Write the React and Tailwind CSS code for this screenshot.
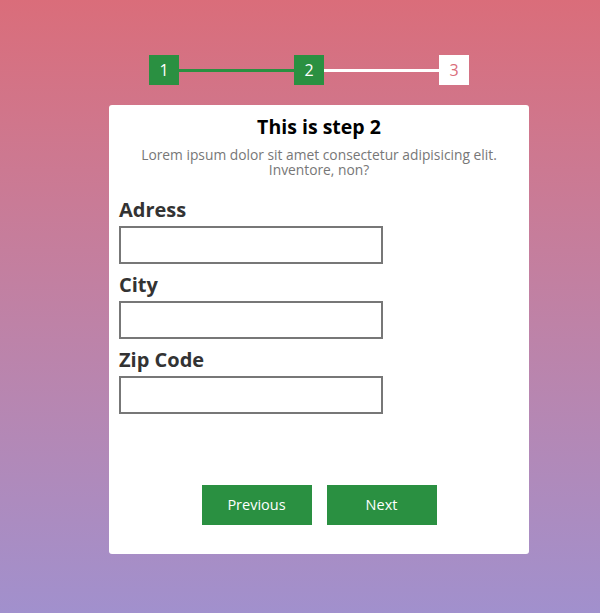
export default function App() {
  return (
    <div
      className="w-full min-h-[613px] bg-gradient-to-b from-[#da6d7a] to-[#a190cd] flex flex-col items-center pt-[55px]"
      style={{ fontFamily: '"Open Sans", "Liberation Sans", sans-serif' }}
    >
      {/* Step indicator */}
      <div className="flex items-center ml-[18px]">
        <div className="w-[30px] h-[30px] bg-[#2a9041] text-white flex items-center justify-center text-[16px]">1</div>
        <div className="w-[115px] h-[3px] bg-[#2a9041]" />
        <div className="w-[30px] h-[30px] bg-[#2a9041] text-white flex items-center justify-center text-[16px]">2</div>
        <div className="w-[115px] h-[3px] bg-white" />
        <div className="w-[30px] h-[30px] bg-white text-[#da6d7a] flex items-center justify-center text-[16px]">3</div>
      </div>

      {/* Card */}
      <div className="mt-[20px] ml-[38px] w-[420px] h-[449px] bg-white rounded-[3px] px-[10px] pt-[10px] flex flex-col">
        <h2 className="text-center text-[19.5px] font-bold text-black leading-[24px]">This is step 2</h2>
        <p className="mt-[8px] text-center text-[13.8px] leading-[15px] text-[#777] px-[20px]">
          Lorem ipsum dolor sit amet consectetur adipisicing elit. Inventore, non?
        </p>

        <div className="mt-[21px] flex flex-col">
          <label className="text-[20px] font-bold text-[#333] leading-[24px]">Adress</label>
          <input className="mt-[4px] w-[264px] h-[38px] border-2 border-[#777] outline-none" />
          <label className="mt-[9px] text-[20px] font-bold text-[#333] leading-[24px]">City</label>
          <input className="mt-[4px] w-[264px] h-[38px] border-2 border-[#777] outline-none" />
          <label className="mt-[9px] text-[20px] font-bold text-[#333] leading-[24px]">Zip Code</label>
          <input className="mt-[4px] w-[264px] h-[38px] border-2 border-[#777] outline-none" />
        </div>

        <div className="mt-[71px] flex justify-center gap-[15px]">
          <button className="w-[110px] h-[40px] bg-[#2a9041] text-white text-[14.5px]">Previous</button>
          <button className="w-[110px] h-[40px] bg-[#2a9041] text-white text-[14.5px]">Next</button>
        </div>
      </div>
    </div>
  );
}
